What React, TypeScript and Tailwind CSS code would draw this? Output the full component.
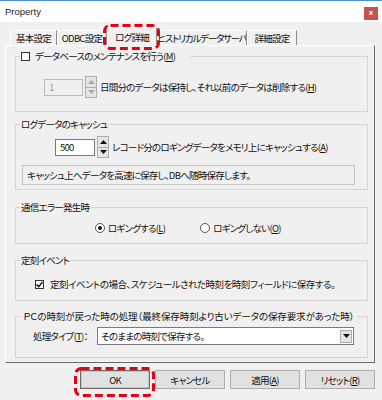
import React from 'react'

const jp = "font-['Noto_Sans_CJK_JP',sans-serif] [font-feature-settings:'palt']"

function U({ k }: { k: string }) {
  return (
    <>
      (<span className="underline underline-offset-1">{k}</span>)
    </>
  )
}

function Arrow({ up, color }: { up?: boolean; color: string }) {
  return (
    <svg width="7" height="4" viewBox="0 0 7 4">
      <polygon points={up ? '0,4 7,4 3.5,0' : '0,0 7,0 3.5,4'} fill={color} />
    </svg>
  )
}

function Spinner({ disabled }: { disabled?: boolean }) {
  const c = disabled ? '#a8a8a8' : '#111'
  return (
    <div className="flex h-[22px] w-[12px] flex-col border border-[#adadad] bg-[#e5e5e5]">
      <div className="flex flex-1 items-center justify-center border-b border-[#adadad]">
        <Arrow up color={c} />
      </div>
      <div className="flex flex-1 items-center justify-center">
        <Arrow color={c} />
      </div>
    </div>
  )
}

function CheckBox({ checked }: { checked?: boolean }) {
  return (
    <span className="flex h-[9px] w-[9px] shrink-0 items-center justify-center border border-[#333] bg-white">
      {checked && (
        <svg width="7" height="7" viewBox="0 0 7 7">
          <path d="M0.5 3.5 L2.7 5.6 L6.5 1" stroke="#111" strokeWidth="1.4" fill="none" />
        </svg>
      )}
    </span>
  )
}

function Radio({ on }: { on?: boolean }) {
  return (
    <span className="flex h-[10px] w-[10px] shrink-0 items-center justify-center rounded-full border border-[#555] bg-white">
      {on && <span className="h-[4px] w-[4px] rounded-full bg-[#111]" />}
    </span>
  )
}

function Tab({ label, w, active, tight }: { label: string; w: string; active?: boolean; tight?: boolean }) {
  if (active) {
    return (
      <div className={`${w} relative z-10 mb-[-1px] flex h-[19px] items-center justify-center border-l border-r border-t border-l-white border-r-[#8a8a8a] border-t-white bg-[#f0f0f0]`}>
        {label}
      </div>
    )
  }
  return (
    <div className={`${w} ${tight ? 'tracking-[-1.2px]' : ''} flex h-[15px] items-center justify-center overflow-hidden border-l border-r border-t border-l-white border-r-[#8a8a8a] border-t-white`}>
      {label}
    </div>
  )
}

function Button({ children, def }: { children: React.ReactNode; def?: boolean }) {
  return (
    <div
      className={`flex h-[19px] w-[70px] items-center justify-center border bg-[#e1e1e1] ${
        def ? 'border-[#6a6a6a] shadow-[inset_0_0_0_1px_#c4c4c4]' : 'border-[#adadad]'
      }`}
    >
      {children}
    </div>
  )
}

export default function App() {
  return (
    <div className={`relative h-[400px] w-[382px] overflow-hidden whitespace-nowrap border-t border-[#4f8fd6] bg-[#f0f0f0] text-[9.5px] leading-[12px] tracking-[-0.75px] text-[#111] ${jp}`}>
      <div className="flex h-[21px] items-center justify-between bg-white pl-[5px] pr-[4px]">
        <span className="font-['Liberation_Sans',sans-serif] text-[9.5px] tracking-normal text-[#222]">Property</span>
        <span className="mt-[3px] flex h-[13px] w-[14px] items-center justify-center bg-[#c75050] font-['Liberation_Sans',sans-serif] text-[8px] font-bold leading-none tracking-normal text-white">
          x
        </span>
      </div>

      <div className="px-[5px] pt-[5px]">
        <div className="flex h-[18px] items-end pl-[5px]">
          <Tab label="基本設定" w="w-[47px]" />
          <Tab label="ODBC設定" w="w-[50px]" />
          <Tab label="ログ詳細" w="w-[50px]" active />
          <Tab label="ヒストリカルデータサーバ" w="w-[90px]" tight />
          <Tab label="詳細設定" w="w-[50px]" />
        </div>

        <div className="h-[318px] w-[370px] border border-b-[#696969] border-l-white border-r-[#696969] border-t-white pl-[9px] pt-[4px]">
          <fieldset className="h-[62px] w-[353px] border border-[#d5d5d5]">
            <legend className="ml-[4px] flex w-[170px] items-center gap-[5px] pl-[1px]">
              <CheckBox />
              <span>
                データベースのメンテナンスを行う<U k="M" />
              </span>
            </legend>
            <div className="ml-[28px] mt-[14px] flex items-center">
              <div className="flex h-[17px] w-[39px] items-center border border-[#bcbcbc] bg-[#f0f0f0] pl-[4px] text-[#9a9a9a]">1</div>
              <div className="ml-[2px]">
                <Spinner disabled />
              </div>
              <span className="ml-[3px]">
                日間分のデータは保持し、それ以前のデータは削除する<U k="H" />
              </span>
            </div>
          </fieldset>

          <fieldset className="mt-[6px] h-[72px] w-[353px] border border-[#d5d5d5]">
            <legend className="ml-[4px] px-[1px]">ログデータのキャッシュ</legend>
            <div className="ml-[39px] mt-[6px] flex items-center">
              <div className="flex h-[17px] w-[40px] items-center border border-[#7a7a7a] bg-white pl-[4px]">500</div>
              <div className="ml-[2px]">
                <Spinner />
              </div>
              <span className="ml-[3px]">
                レコード分のロギングデータをメモリ上にキャッシュする<U k="A" />
              </span>
            </div>
            <div className="ml-[6px] mt-[7px] flex h-[20px] w-[333px] items-center border border-[#c4c4c4] pl-[4px]">
              キャッシュ上へデータを高速に保存し、DBへ随時保存します。
            </div>
          </fieldset>

          <fieldset className="mt-[11px] h-[43px] w-[353px] border border-[#d5d5d5]">
            <legend className="ml-[4px] px-[1px]">通信エラー発生時</legend>
            <div className="ml-[79px] mt-[9px] flex items-center">
              <Radio on />
              <span className="ml-[3px]">
                ロギングする<U k="L" />
              </span>
              <span className="ml-[35px]">
                <Radio />
              </span>
              <span className="ml-[3px]">
                ロギングしない<U k="O" />
              </span>
            </div>
          </fieldset>

          <fieldset className="mt-[10px] h-[47px] w-[353px] border border-[#d5d5d5]">
            <legend className="ml-[4px] px-[1px]">定刻イベント</legend>
            <div className="ml-[19px] mt-[12px] flex items-center">
              <CheckBox checked />
              <span className="ml-[6px] tracking-[-0.5px]">定刻イベントの場合、スケジュールされた時刻を時刻フィールドに保存する。</span>
            </div>
          </fieldset>

          <fieldset className="mt-[9px] h-[48px] w-[353px] border border-[#d5d5d5]">
            <legend className="ml-[4px] px-[3px] tracking-[-0.1px]">ＰＣの時刻が戻った時の処理（最終保存時刻より古いデータの保存要求があった時）</legend>
            <div className="ml-[17px] mt-[5px] flex items-center">
              <span className="w-[64px]">
                処理タイプ<U k="T" />：
              </span>
              <div className="flex h-[18px] w-[257px] items-center justify-between border border-[#7a7a7a] bg-white pl-[3px] pr-[1px]">
                <span>そのままの時刻で保存する。</span>
                <span className="flex h-[13px] w-[12px] items-center justify-center border border-[#adadad] bg-[#e5e5e5]">
                  <Arrow color="#111" />
                </span>
              </div>
            </div>
          </fieldset>
        </div>

        <div className="mt-[7px] flex justify-end gap-[5px] pr-[2px]">
          <Button def>OK</Button>
          <Button>キャンセル</Button>
          <Button>
            適用<U k="A" />
          </Button>
          <Button>
            リセット<U k="R" />
          </Button>
        </div>
      </div>

      <svg className="absolute left-[103px] top-[23px]" width="57" height="26" viewBox="0 0 57 26">
        <rect x="1.5" y="1.5" width="54" height="23" rx="6" fill="none" stroke="#e60012" strokeWidth="3" strokeDasharray="8 4" />
      </svg>
      <svg className="absolute left-[74px] top-[366px]" width="81" height="30" viewBox="0 0 81 30">
        <rect x="1.5" y="1.5" width="78" height="27" rx="6" fill="none" stroke="#e60012" strokeWidth="3" strokeDasharray="8 4" />
      </svg>
    </div>
  )
}
